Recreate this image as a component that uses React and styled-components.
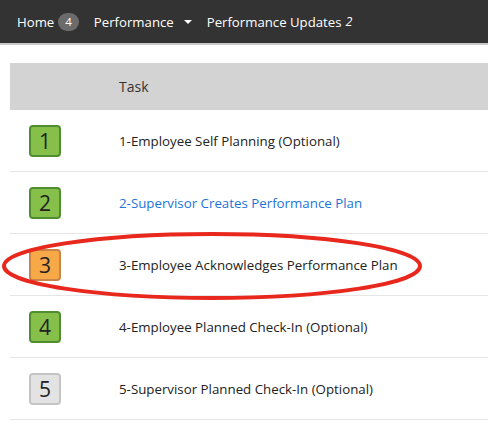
import React from 'react';
import styled, { createGlobalStyle } from 'styled-components';

const GlobalStyle = createGlobalStyle`
  body {
    margin: 0;
    background: #fff;
    font-family: "Open Sans", "Liberation Sans", sans-serif;
    color: #222;
  }
`;

const NavBar = styled.nav`
  height: 43px;
  background: #333;
  border-bottom: 2px solid #c8c8c8;
  display: flex;
  align-items: center;
  gap: 15px;
  padding-left: 17px;
  font-size: 13.2px;
  color: #fff;
`;

const NavItem = styled.span`
  display: flex;
  align-items: center;
  gap: 4px;
`;

const CountPill = styled.span`
  background: #6b6b6b;
  color: #fff;
  font-size: 11.5px;
  border-radius: 10px;
  padding: 0 7px;
  line-height: 18px;
`;

const Caret = styled.span`
  width: 0;
  height: 0;
  border-left: 4px solid transparent;
  border-right: 4px solid transparent;
  border-top: 4px solid #fff;
  margin-left: 6px;
`;

const Count = styled.em`
  font-size: 12.5px;
`;

const Table = styled.div`
  position: relative;
  margin: 18px 0 0 10px;
`;

const HeaderRow = styled.div`
  height: 47px;
  background: #d3d3d3;
  display: flex;
  align-items: center;
  padding-left: 109px;
  font-size: 14px;
  color: #333;
`;

const Row = styled.div`
  height: 61px;
  border-bottom: 1px solid #e6e6e6;
  display: grid;
  grid-template-columns: 109px 1fr;
  align-items: center;
  font-size: 13.3px;
`;

const badgeColors = {
  done: { bg: '#86c04a', border: '#4f8d30' },
  current: { bg: '#f7a847', border: '#c98547' },
  todo: { bg: '#e3e3e3', border: '#c4c4c4' },
};

const StepBadge = styled.div`
  width: 28px;
  height: 28px;
  margin-left: 19px;
  border-radius: 4px;
  border: 2px solid ${p => badgeColors[p.$state].border};
  background: ${p => badgeColors[p.$state].bg};
  display: flex;
  align-items: center;
  justify-content: center;
  font-size: 21px;
  color: #222;
`;

const TaskName = styled.span`
  color: ${p => (p.$link ? '#1d74d8' : '#222')};
`;

const Highlight = styled.svg`
  position: absolute;
  left: -10px;
  top: 0;
  pointer-events: none;
`;

const steps = [
  { n: 1, name: '1-Employee Self Planning (Optional)', state: 'done' },
  { n: 2, name: '2-Supervisor Creates Performance Plan', state: 'done', link: true },
  { n: 3, name: '3-Employee Acknowledges Performance Plan', state: 'current' },
  { n: 4, name: '4-Employee Planned Check-In (Optional)', state: 'done' },
  { n: 5, name: '5-Supervisor Planned Check-In (Optional)', state: 'todo' },
];

export default function App() {
  return (
    <>
      <GlobalStyle />
      <NavBar>
        <NavItem>Home <CountPill>4</CountPill></NavItem>
        <NavItem>Performance <Caret /></NavItem>
        <NavItem>Performance Updates <Count>2</Count></NavItem>
      </NavBar>
      <Table>
        <HeaderRow>Task</HeaderRow>
        {steps.map(s => (
          <Row key={s.n}>
            <StepBadge $state={s.state}>{s.n}</StepBadge>
            <TaskName $link={s.link}>{s.name}</TaskName>
          </Row>
        ))}
        <Highlight width="488" height="370">
          <ellipse cx="212" cy="203" rx="208" ry="32" fill="none" stroke="#e8271d" strokeWidth="4" />
        </Highlight>
      </Table>
    </>
  );
}
